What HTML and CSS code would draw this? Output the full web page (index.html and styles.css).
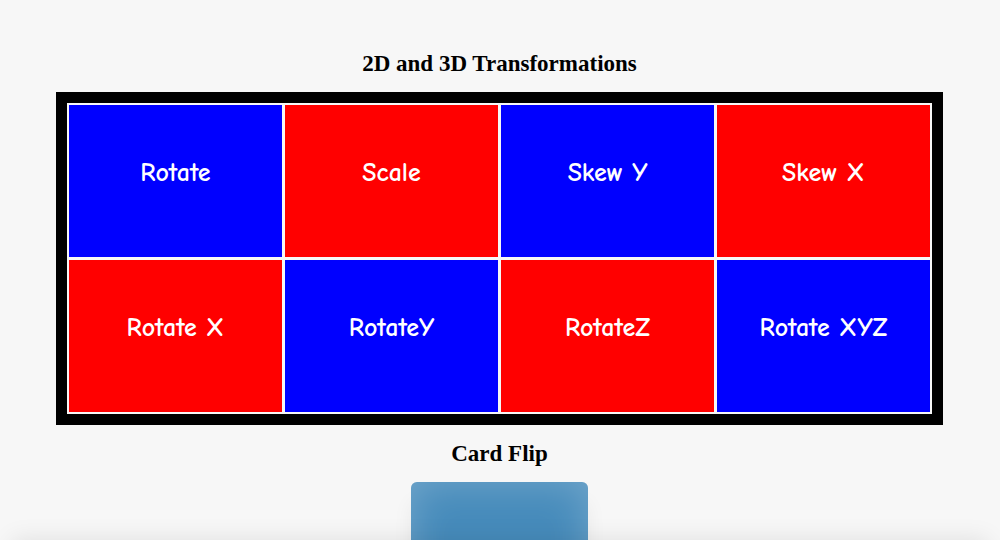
FILE: index.html
```html
<!DOCTYPE html>
<html lang="en">
<head>
<meta charset="utf-8">
<meta name="viewport" content="width=device-width, initial-scale=1">
<title>2D and 3D Transformations</title>
<link rel="stylesheet" href="styles.css">
</head>
<body>
<main class="page">
  <section class="section">
    <h2 class="title">2D and 3D Transformations</h2>
    <div class="grid">
      <div class="tile blue">Rotate</div>
      <div class="tile red">Scale</div>
      <div class="tile blue">Skew Y</div>
      <div class="tile red">Skew X</div>
      <div class="tile red">Rotate X</div>
      <div class="tile blue">RotateY</div>
      <div class="tile red">RotateZ</div>
      <div class="tile blue">Rotate XYZ</div>
    </div>
  </section>
  <section class="section">
    <h2 class="title">Card Flip</h2>
    <div class="card"></div>
  </section>
</main>
</body>
</html>
```

FILE: styles.css
```css
* {
  box-sizing: border-box;
}

body {
  margin: 0;
  background: #f7f7f7;
  color: #000;
  font-family: "Liberation Serif", "Times New Roman", serif;
}

.page {
  height: 100vh;
  padding: 50px 57px 0 56px;
  overflow: hidden;
}

/* soft shade along the lower edge of the window */
.page::after {
  content: "";
  position: fixed;
  left: 12px;
  right: 12px;
  top: 100%;
  height: 40px;
  box-shadow: 0 0 24px rgba(0, 0, 0, 0.1);
}

.title {
  margin: 0 0 14px;
  font-size: 23px;
  line-height: 28px;
  font-weight: bold;
  text-align: center;
}

.grid {
  display: grid;
  grid-template-columns: repeat(4, 1fr);
  grid-auto-rows: 152px;
  gap: 3px;
  padding: 2px;
  margin-bottom: 15px;
  border: 11px solid #000;
  background: #f7f7f7;
}

.tile {
  display: flex;
  align-items: center;
  justify-content: center;
  padding-bottom: 16px;
  color: #fff;
  font-family: "Comic Sans MS", "Comic Neue", Lato, sans-serif;
  font-size: 26px;
  font-weight: bold;
  line-height: 32px;
}

.blue {
  background: #00f;
}

.red {
  background: #f00;
}

.card {
  width: 177px;
  height: 240px;
  margin: 0 auto;
  border-radius: 6px;
  background: #468bbb;
  box-shadow: 0 20px 20px rgba(0, 0, 0, 0.06), inset 0 0 40px rgba(255, 255, 255, 0.25);
}
```
